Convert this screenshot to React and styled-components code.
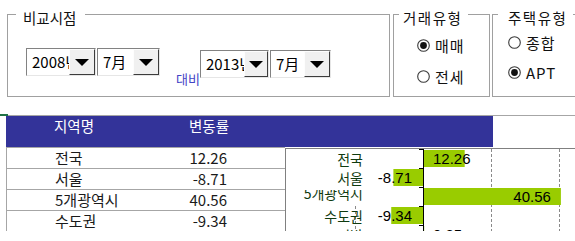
import React from 'react';
import styled, { createGlobalStyle } from 'styled-components';

const KR = `"Noto Sans CJK KR", "Noto Sans", sans-serif`;
const ARIAL = `"Liberation Sans", Arial, sans-serif`;

const regions = [
    { name: '전국', value: 12.26 },
    { name: '서울', value: -8.71 },
    { name: '5개광역시', value: 40.56, clipped: true },
    { name: '수도권', value: -9.34 },
    { name: '지방', value: 0.35 },
];

const GlobalStyle = createGlobalStyle`
body{
    margin:0;
    background:#fff;
    font-family:${KR};
    color:#111;
}
`

// chart geometry, px
const SCALE = 3.4;
const AXIS = 137;
const BAND = 19;
const textWidth = (s) => [...s].reduce((w, c) => w + (c === '.' ? 4.17 : c === '-' ? 5 : 8.34), 0);

function Combo({ text, fieldW, btnW }) {
    return (
        <ComboBox>
            <ComboField style={{ width: fieldW }}>{text}</ComboField>
            <ComboButton style={{ width: btnW }}><Arrow /></ComboButton>
        </ComboBox>
    )
}

function Radio({ label, checked }) {
    return (
        <RadioRow>
            <svg width="13" height="13" viewBox="0 0 13 13">
                <circle cx="6.5" cy="6.5" r="5.8" fill="#fff" stroke="#3a3a3a" strokeWidth="1.1" />
                {checked && <circle cx="6.5" cy="6.5" r="3.4" fill="#111" />}
            </svg>
            <RadioText>{label}</RadioText>
        </RadioRow>
    )
}

function BarChart({ data }) {
    const h = 90;
    // gridlines: x position, and where the dashes start (labels hide the upper part of the -20 line)
    const grid = [[69, 57], [205, 0], [273, 0]];
    return (
        <svg width="289" height={h} style={{ display: 'block' }}>
            <defs>
                {data.map((r, i) => (
                    <clipPath key={i} id={`band-${i}`}>
                        <rect x="0" y={i * BAND + 3} width="136" height={BAND} />
                    </clipPath>
                ))}
            </defs>
            {grid.map(([x, y0]) => (
                <line key={x} x1={x + 0.5} x2={x + 0.5} y1={y0} y2={h} stroke="#8a8a8a" strokeDasharray="3 2" />
            ))}
            {data.map((r, i) => {
                const top = i * BAND;
                const w = Math.abs(r.value) * SCALE;
                const label = r.value.toFixed(2);
                const lw = textWidth(label);
                const pos = r.value >= 0;
                const barX = pos ? AXIS : AXIS - w;
                const lx = pos ? Math.max(AXIS + w - 10 - lw, AXIS + 10) : Math.min(barX + 10, AXIS - 11 - lw);
                return (
                    <g key={r.name}>
                        <rect x={barX} y={top + 1} width={w} height="17" fill="#99cc00" />
                        <text x={lx} y={top + 15} fontFamily={ARIAL} fontSize="15" fill="#000">{label}</text>
                        <text
                            x="77"
                            y={top + (r.clipped ? 6 : 9.5)}
                            textAnchor="end"
                            dominantBaseline="central"
                            fontFamily={KR}
                            fontSize="14"
                            fill="#0f3a0f"
                            clipPath={r.clipped ? `url(#band-${i})` : undefined}
                        >{r.name}</text>
                    </g>
                )
            })}
            <line x1={AXIS + 0.5} x2={AXIS + 0.5} y1="0" y2={h} stroke="#000" />
            {data.map((r, i) => (
                <line key={i} x1={AXIS - 4} x2={AXIS} y1={i * BAND + 0.5} y2={i * BAND + 0.5} stroke="#000" />
            ))}
        </svg>
    )
}

function App() {
    return (
        <Page>
            <GlobalStyle />
            <Controls>
                <Group style={{ width: 383 }}>
                    <Legend $ml={8} $pl={7} $pr={9}>비교시점</Legend>
                    <ComboRow>
                        <ComboPair>
                            <Combo text="2008년" fieldW={42} btnW={26} />
                            <Combo text="7月" fieldW={35} btnW={26} />
                        </ComboPair>
                        <Versus>대비</Versus>
                        <ComboPair $offset={2}>
                            <Combo text="2013년" fieldW={43} btnW={24} />
                            <Combo text="7月" fieldW={33} btnW={26} />
                        </ComboPair>
                    </ComboRow>
                </Group>
                <Group style={{ width: 97, marginLeft: 3 }}>
                    <Legend $ml={5} $pl={4} $pr={6} $spaced>거래유형</Legend>
                    <RadioList $pt={4} $pl={23} $row={31}>
                        <Radio label="매매" checked />
                        <Radio label="전세" />
                    </RadioList>
                </Group>
                <Group style={{ width: 100, marginLeft: 2 }}>
                    <Legend $ml={5} $pl={10} $pr={6} $spaced>주택유형</Legend>
                    <RadioList $pt={1} $pl={15} $row={30}>
                        <Radio label="종합" />
                        <Radio label="APT" checked />
                    </RadioList>
                </Group>
            </Controls>
            <Sheet>
                <HeaderRow>
                    <HeadCell>지역명</HeadCell>
                    <HeadCell $pl={30}>변동률</HeadCell>
                </HeaderRow>
                <Body>
                    <Table>
                        {regions.map(r => (
                            <Row key={r.name}>
                                <NameCell>{r.name}</NameCell>
                                <ValueCell>{r.value.toFixed(2)}</ValueCell>
                            </Row>
                        ))}
                    </Table>
                    <ChartBox>
                        <BarChart data={regions} />
                    </ChartBox>
                </Body>
            </Sheet>
        </Page>
    )
}

const Page = styled.div`
width:575px;
height:241px;
overflow:hidden;
background:#fff;
`

const Controls = styled.div`
display:flex;
align-items:flex-start;
height:115px;
padding:2px 0 0 7px;
box-sizing:border-box;
`

const Group = styled.fieldset`
flex:none;
height:95px;
box-sizing:border-box;
margin:0;
padding:0;
border:1px solid #a0a0a0;
min-width:0;
`

const Legend = styled.legend`
margin-left:${p => p.$ml}px;
padding:8px ${p => p.$pr}px 0 ${p => p.$pl}px;
font-size:14.5px;
line-height:16px;
letter-spacing:${p => p.$spaced ? '1.5px' : '0'};
color:#111;
`

const ComboRow = styled.div`
display:flex;
align-items:flex-start;
padding:22px 0 0 18px;
`

const ComboPair = styled.div`
display:flex;
gap:1px;
margin-top:${p => p.$offset || 0}px;
`

const ComboBox = styled.div`
display:flex;
height:28px;
box-sizing:border-box;
border:1px solid;
border-color:#828282 #e6e6e6 #e6e6e6 #828282;
background:#fff;
`

const ComboField = styled.div`
flex:none;
overflow:hidden;
white-space:nowrap;
padding-left:5px;
box-sizing:border-box;
font-size:15px;
line-height:26px;
color:#000;
`

const ComboButton = styled.div`
flex:none;
display:flex;
align-items:center;
justify-content:center;
box-sizing:border-box;
background:#f0f0f0;
border:1px solid;
border-color:#fdfdfd #3c3c3c #3c3c3c #fdfdfd;
`

const Arrow = styled.span`
width:0;
height:0;
border-left:7px solid transparent;
border-right:7px solid transparent;
border-top:7px solid #000;
`

const Versus = styled.span`
margin:23px 0 0 16px;
font-size:13px;
line-height:16px;
color:#4343c6;
`

const RadioList = styled.div`
display:flex;
flex-direction:column;
padding:${p => p.$pt}px 0 0 ${p => p.$pl}px;
& > *{
    height:${p => p.$row}px;
}
`

const RadioRow = styled.div`
display:flex;
align-items:center;
gap:5px;
`

const RadioText = styled.span`
font-size:15px;
letter-spacing:1px;
color:#111;
`

const Sheet = styled.div`
position:relative;
border-top:1px solid #a6a6a6;
&:before{
    content:"";
    position:absolute;
    left:0;
    top:-2px;
    width:8px;
    height:2px;
    background:#217346;
}
`

const HeaderRow = styled.div`
display:grid;
grid-template-columns:153px 1fr;
width:487px;
height:31px;
margin-left:6px;
background:#333399;
`

const HeadCell = styled.div`
padding-left:${p => p.$pl ?? 48}px;
font-size:14.5px;
line-height:19px;
color:#fff;
`

const Body = styled.div`
display:flex;
align-items:flex-start;
height:84px;
overflow:hidden;
padding-left:6px;
`

const Table = styled.div`
width:279px;
box-sizing:border-box;
border-left:1px solid #a6a6a6;
flex:none;
`

const Row = styled.div`
display:grid;
grid-template-columns:153px 67px;
height:21px;
box-sizing:border-box;
border-top:1px solid #a6a6a6;
font-size:15px;
line-height:20px;
color:#1a1a1a;
`

const NameCell = styled.div`
padding-left:48px;
white-space:nowrap;
`

const ValueCell = styled.div`
text-align:right;
`

const ChartBox = styled.div`
flex:none;
margin-top:1px;
width:300px;
border-left:1px solid #808080;
border-top:1px solid #808080;
background:#fff;
`

export default App
